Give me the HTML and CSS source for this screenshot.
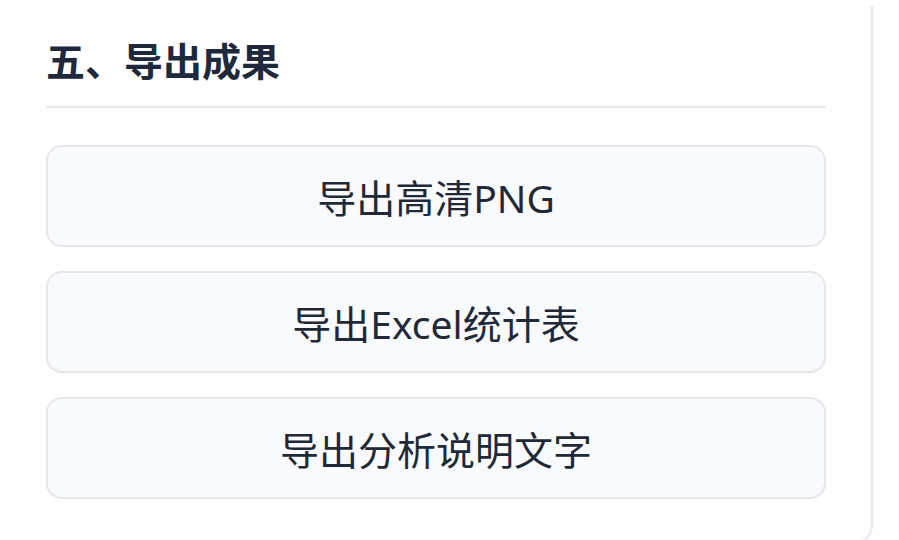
FILE: index.html
```html
<html>
<head>
  <meta charset="utf-8">
  <title>导出成果</title>
  <link rel="stylesheet" href="styles.css">
</head>
<body>

<div class="panel">
  <h2 class="panel-title">五、导出成果</h2>
  <div class="export-list">
    <button class="export-btn">导出高清PNG</button>
    <button class="export-btn">导出Excel统计表</button>
    <button class="export-btn">导出分析说明文字</button>
  </div>
</div>

</body>
</html>
```

FILE: styles.css
```css
body {
  margin: 0;
  background: #fff;
  font-family: "Noto Sans", "Noto Sans CJK SC", sans-serif;
  color: #1f2937;
  overflow: hidden;
}
.panel {
  width: 780px;
  margin-top: 6px;
  margin-left: -20px;
  padding: 30px 45px 44px 64px;
  background: #fefefe;
  border: 2px solid #e8e9ee;
  border-top: none;
  border-radius: 0 0 20px 20px;
}
.panel-title {
  margin: 0 0 37px;
  padding-bottom: 20px;
  font-size: 39px;
  line-height: 50px;
  font-weight: bold;
  color: #1e293b;
  border-bottom: 2px solid #e8e9ee;
}
.export-list {
  display: flex;
  flex-direction: column;
  gap: 24px;
}
.export-btn {
  height: 102px;
  width: 100%;
  background: #f9fafb;
  border: 2px solid #e6e7eb;
  border-radius: 16px;
  font-family: inherit;
  font-size: 39px;
  color: #1f2937;
  cursor: pointer;
}
.export-btn:hover {
  background: #f1f3f6;
}
```
